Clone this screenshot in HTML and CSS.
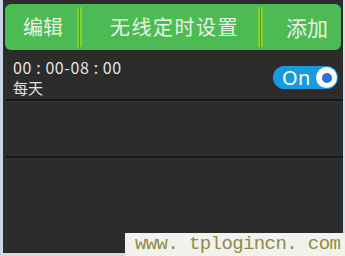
FILE: index.html
```html
<!DOCTYPE html>
<html lang="zh">
<head>
<meta charset="utf-8">
<link rel="stylesheet" href="styles.css">
</head>
<body>
<div class="frame">
  <div class="header">
    <span class="hbtn edit">编辑</span>
    <span class="sep"></span>
    <span class="title">无线定时设置</span>
    <span class="sep sep2"></span>
    <span class="hbtn add">添加</span>
  </div>
  <div class="row first">
    <div class="info">
      <div class="time">00 : 00-08 : 00</div>
      <div class="days">每天</div>
    </div>
    <div class="toggle">
      <span class="on">On</span>
      <span class="knob"><span class="dot"></span></span>
    </div>
  </div>
  <div class="line"></div>
  <div class="row empty"></div>
  <div class="line"></div>
  <div class="rest"></div>
  <div class="watermark">www. tplogincn. com</div>
</div>
</body>
</html>
```
FILE: styles.css
```css
* { box-sizing: border-box; }
html, body {
  margin: 0;
  padding: 0;
  width: 345px;
  height: 256px;
  overflow: hidden;
  background: #2c2c2c;
  font-family: "Noto Sans CJK SC", "Noto Sans", sans-serif;
}
.frame {
  position: relative;
  width: 345px;
  height: 256px;
  background: #2c2c2c;
  border-left: 3px solid #c9d7e5;
  border-right: 2px solid #d9dee3;
  border-bottom: 3px solid #d5dadf;
  display: flex;
  flex-direction: column;
}
.header {
  margin: 4px 2px 0 2px;
  height: 46px;
  background: #4dbb53;
  border-radius: 6px;
  display: flex;
  align-items: center;
  color: #e9f5e6;
  padding-left: 18px;
}
.hbtn {
  font-size: 20px;
  line-height: 24px;
  white-space: nowrap;
}
.add {
  font-size: 21px;
  margin-left: 23px;
}
.sep {
  width: 5px;
  height: 40px;
  margin-left: 14px;
  background: linear-gradient(to right, #7dcc2c 0, #8ad634 40%, #4f9e22 50%, #8ad634 60%, #7dcc2c 100%);
}
.sep2 { margin-left: 19px; }
.title {
  font-size: 20px;
  letter-spacing: 1.5px;
  line-height: 24px;
  margin-left: 28px;
  white-space: nowrap;
}
.row {
  display: flex;
  justify-content: space-between;
  align-items: flex-start;
}
.row.first {
  height: 49px;
  padding: 8px 5px 0 10px;
}
.time {
  color: #e2e2e2;
  font-size: 16px;
  line-height: 18px;
  letter-spacing: 0.6px;
  white-space: pre;
}
.days {
  color: #e2e2e2;
  font-size: 15px;
  line-height: 17px;
  margin-top: 3px;
}
.toggle {
  margin-top: 8px;
  width: 65px;
  height: 23px;
  border-radius: 12px;
  background: #1a9ade;
  display: flex;
  align-items: center;
  justify-content: space-between;
  padding: 0 1px 0 9px;
}
.on {
  color: #ffffff;
  font-family: "Noto Sans", sans-serif;
  font-size: 20px;
  line-height: 22px;
  letter-spacing: 0.5px;
}
.knob {
  width: 21px;
  height: 21px;
  border-radius: 50%;
  background: #ffffff;
  display: flex;
  align-items: center;
  justify-content: center;
}
.dot {
  width: 10px;
  height: 10px;
  border-radius: 50%;
  background: #2e6fd0;
}
.line {
  margin: 0 0 0 3px;
  background: #161616;
  border-bottom: 1px solid #333;
  height: 3px;
}
.row.empty { height: 54px; }
.rest { flex: 1; }
.watermark {
  position: absolute;
  left: 122px;
  top: 233px;
  width: 223px;
  height: 23px;
  background: #f2f2ec;
  color: #8f8a48;
  font-family: "Liberation Mono", monospace;
  font-size: 19px;
  letter-spacing: -0.6px;
  line-height: 22px;
  padding-left: 10px;
  white-space: nowrap;
}
```
